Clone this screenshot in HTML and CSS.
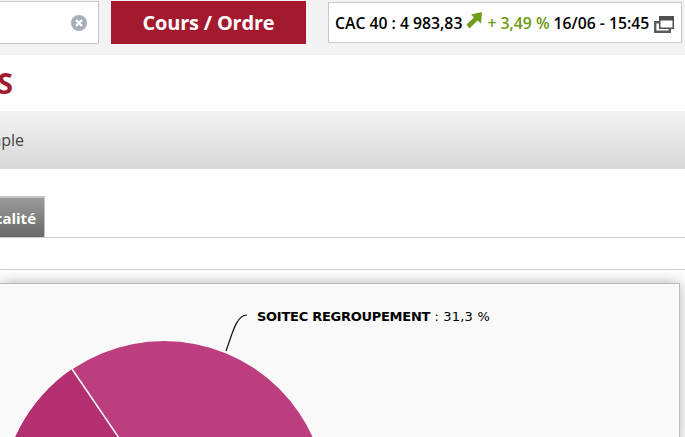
FILE: index.html
```html
<!DOCTYPE html>
<html lang="fr">
<head>
    <meta charset="UTF-8">
    <meta name="viewport" content="width=device-width, initial-scale=1.0">
    <title>Portefeuille</title>
    <link rel="stylesheet" href="styles.css">
</head>
<body>
    <header class="top-bar">
        <div class="search-box">
            <svg class="clear-icon" width="16" height="16" viewBox="0 0 16 16">
                <circle cx="8" cy="8" r="8" fill="#a8aeb9"/>
                <path d="M5 5l6 6M11 5l-6 6" stroke="#fff" stroke-width="2.4"/>
            </svg>
        </div>
        <button class="order-btn">Cours / Ordre</button>
        <div class="ticker">
            <span>CAC 40 : 4 983,83</span>
            <svg class="arrow-icon" width="17" height="18" viewBox="0 0 17 18">
                <path d="M0.5 13.5L8 6.5L5 3.5L16 1L15 12.5L11.5 9.5L3.5 17.5Z" fill="#6f9c1a"/>
            </svg>
            <span class="ticker-up">+ 3,49 %</span>
            <span>16/06 - 15:45</span>
            <svg class="window-icon" width="20" height="17" viewBox="0 0 20 17">
                <path d="M1.2 6.2h14.6v9.6H1.2z" fill="#fff" stroke="#5c5c5c" stroke-width="2.4"/>
                <path d="M5 0h15v13H5z" fill="#505050"/>
                <path d="M6.5 4.5h12v7h-12z" fill="#fff"/>
            </svg>
        </div>
    </header>

    <div class="title-row">
        <h1 class="page-title"><span>ACTIONS</span></h1>
    </div>

    <div class="sub-bar">
        <div class="sub-text"><span>Portefeuille simple</span></div>
    </div>

    <nav class="tabs">
        <div class="tab"><span>Fiscalité</span></div>
    </nav>

    <div class="spacer"></div>

    <section class="chart-area">
        <div class="chart-box">
            <svg class="pie" width="679" height="300" viewBox="0 284 679 300">
                <circle cx="164" cy="504" r="163" fill="#bd3e7e"/>
                <path d="M164 504L72 369A163 163 0 0 0 1 504Z" fill="#b32f70"/>
                <path d="M164 504L72 369" stroke="#fff" stroke-width="1.5"/>
                <path d="M226 351C232 335 236 315 247 315" fill="none" stroke="#111" stroke-width="1.2"/>
                <text class="pie-label" x="257" y="321"><tspan class="pie-name">SOITEC REGROUPEMENT</tspan> : 31,3 %</text>
            </svg>
        </div>
    </section>
</body>
</html>
```

FILE: styles.css
```css
html, body {
    height: 437px;
}

body {
    margin: 0;
    overflow: hidden;
    background-color: #fff;
    font-family: 'Open Sans', sans-serif;
}

.top-bar {
    display: flex;
    align-items: flex-start;
    height: 55px;
    padding-top: 1px;
    box-sizing: border-box;
    background-color: #f3f3f3;
}

.search-box {
    display: flex;
    align-items: center;
    justify-content: flex-end;
    box-sizing: border-box;
    width: 99px;
    height: 43px;
    padding-right: 11px;
    background-color: #fff;
    border: 1px solid #c8c8c8;
    border-left: none;
}

.order-btn {
    width: 195px;
    height: 43px;
    margin-left: 12px;
    padding: 0;
    border: none;
    background-color: #a31a2e;
    color: #fff;
    font-family: inherit;
    font-size: 20px;
    font-weight: 700;
    letter-spacing: -0.2px;
}

.ticker {
    display: flex;
    align-items: center;
    box-sizing: border-box;
    width: 354px;
    height: 41px;
    margin: 1px 0 0 22px;
    padding-left: 6px;
    background-color: #fff;
    border: 1px solid #c8c8c8;
    color: #000;
    font-size: 15.75px;
    font-weight: 600;
    white-space: nowrap;
}

.ticker-up {
    margin: 0 4px;
    color: #6a9a0f;
}

.arrow-icon {
    margin: -6px 0 0 4px;
}

.window-icon {
    margin: 4px 0 0 5px;
}

.title-row {
    height: 56px;
    display: flex;
    align-items: center;
}

.page-title {
    display: flex;
    justify-content: flex-end;
    width: 13px;
    margin: 0;
    color: #a31a2e;
    font-size: 28px;
    font-weight: 700;
    white-space: nowrap;
}

.sub-bar {
    display: flex;
    align-items: center;
    height: 58px;
    background: linear-gradient(#f3f3f3, #d8d8d8);
}

.sub-text {
    display: flex;
    justify-content: flex-end;
    width: 24px;
    color: #444;
    font-size: 16px;
    white-space: nowrap;
}

.tabs {
    height: 41px;
    padding-top: 27px;
    border-bottom: 1px solid #ccc;
}

.tab {
    display: flex;
    align-items: center;
    justify-content: flex-end;
    box-sizing: border-box;
    width: 45px;
    height: 41px;
    padding-right: 8px;
    background: linear-gradient(#9b9b9b, #686868);
    border: 2px solid #c4c4c4;
    border-width: 2px 1px 0 0;
    color: #fff;
    font-size: 15px;
    font-weight: 700;
    white-space: nowrap;
}

.spacer {
    height: 31px;
    border-bottom: 1px solid #ccc;
}

.chart-area {
    height: 167px;
    padding-top: 13px;
    overflow: hidden;
    background-color: #fff;
}

.chart-box {
    box-sizing: border-box;
    width: 680px;
    height: 160px;
    background-color: #f9f9f9;
    border: 1px solid #bbb;
    border-left: none;
    border-bottom: none;
    box-shadow: 0 0 14px rgba(0, 0, 0, 0.3);
}

.pie {
    display: block;
}

.pie-label {
    font-family: 'DejaVu Sans', sans-serif;
    font-size: 13px;
    letter-spacing: 0.2px;
    fill: #000;
}

.pie-name {
    font-weight: bold;
    letter-spacing: -0.27px;
}
```
